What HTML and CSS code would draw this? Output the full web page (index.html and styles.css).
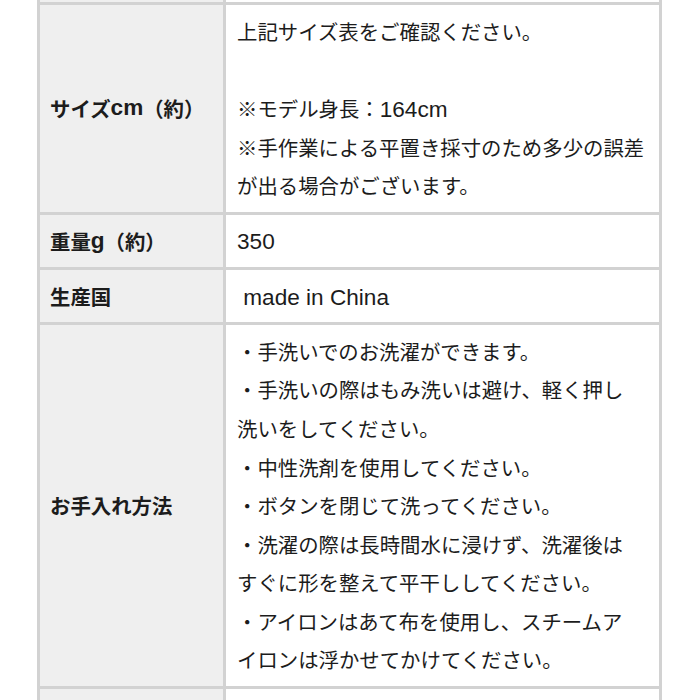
FILE: index.html
```html
<!DOCTYPE html>
<html lang="ja">
<head>
<meta charset="utf-8">
<link rel="stylesheet" href="styles.css">
</head>
<body>
<div class="spec">
  <div class="label prev"></div>
  <div class="value prev"></div>

  <div class="label">サイズ<span class="latin">cm</span>（約）</div>
  <div class="value">
    <div class="line">上記サイズ表をご確認ください。</div>
    <div class="line">&nbsp;</div>
    <div class="line">※モデル身長：<span class="latin">164cm</span></div>
    <div class="line">※手作業による平置き採寸のため多少の誤差</div>
    <div class="line">が出る場合がございます。</div>
  </div>

  <div class="label">重量<span class="latin">g</span>（約）</div>
  <div class="value"><div class="line"><span class="latin">350</span></div></div>

  <div class="label">生産国</div>
  <div class="value"><div class="line"><span class="latin">&nbsp;made in China</span></div></div>

  <div class="label">お手入れ方法</div>
  <div class="value">
    <div class="line">・手洗いでのお洗濯ができます。</div>
    <div class="line">・手洗いの際はもみ洗いは避け、軽く押し</div>
    <div class="line">洗いをしてください。</div>
    <div class="line">・中性洗剤を使用してください。</div>
    <div class="line">・ボタンを閉じて洗ってください。</div>
    <div class="line">・洗濯の際は長時間水に浸けず、洗濯後は</div>
    <div class="line">すぐに形を整えて平干ししてください。</div>
    <div class="line">・アイロンはあて布を使用し、スチームア</div>
    <div class="line">イロンは浮かせてかけてください。</div>
  </div>

  <div class="label next"></div>
  <div class="value next"></div>
</div>
</body>
</html>
```

FILE: styles.css
```css
html, body {
  margin: 0;
  padding: 0;
  background: #ffffff;
  height: 700px;
  overflow: hidden;
}

.spec {
  display: grid;
  grid-template-columns: 183px 433px;
  gap: 3px;
  padding: 3px;
  width: 625px;
  box-sizing: border-box;
  margin: -43px 0 0 37px;
  background: #d2d2d2;
  font-family: "Noto Sans CJK JP", "Noto Sans", sans-serif;
  font-size: 20.4px;
  color: #1c1c1c;
}

.label {
  background: #efefef;
  font-weight: 700;
  display: flex;
  align-items: center;
  padding: 6.8px 10px;
  white-space: nowrap;
}

.value {
  background: #ffffff;
  padding: 6.8px 11px;
}

.line {
  line-height: 38.6px;
  height: 38.6px;
  white-space: nowrap;
}

.latin {
  font-family: "Liberation Sans", Arial, sans-serif;
  font-size: 22.6px;
}

.prev {
  height: 42px;
  padding: 0;
}

.next {
  height: 60px;
  padding: 0;
}
```
